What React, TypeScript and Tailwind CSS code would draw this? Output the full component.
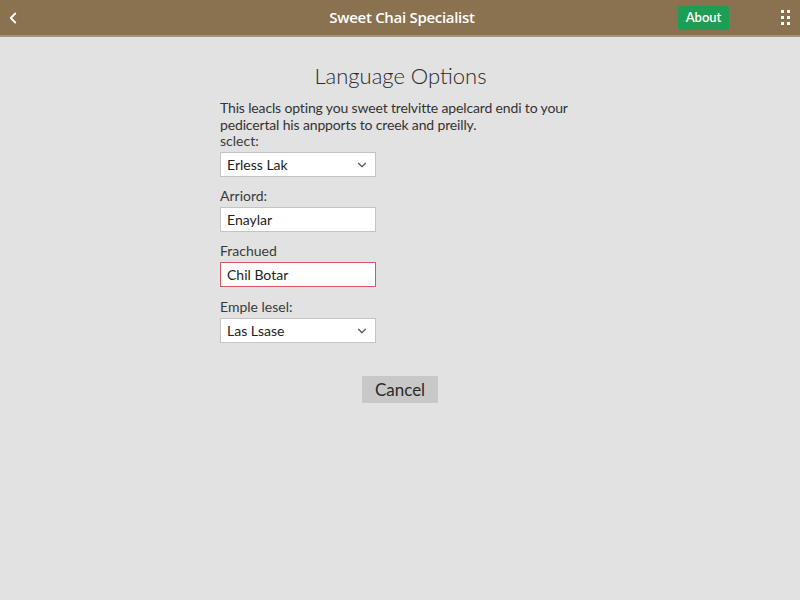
import { ChevronDown, ChevronLeft } from "lucide-react";

const font = { fontFamily: 'Lato, "Open Sans", "Liberation Sans", sans-serif' };

function Label({ children }: { children: React.ReactNode }) {
  return <div className="text-[14px] leading-[18px] text-[#3a3a3a]">{children}</div>;
}

function SelectBox({ value }: { value: string }) {
  return (
    <div className="flex h-[25px] w-[156px] items-center justify-between border border-[#c4c4c4] bg-white pl-[6px] pr-[6px] text-[14px] text-[#222]">
      <span>{value}</span>
      <ChevronDown className="h-[14px] w-[14px] text-[#555]" strokeWidth={2} />
    </div>
  );
}

function TextBox({ value, error }: { value: string; error?: boolean }) {
  return (
    <div
      className={
        error
          ? "flex h-[25px] w-[156px] items-center border border-[#d9595f] bg-white pl-[6px] text-[14px] text-[#222]"
          : "flex h-[25px] w-[156px] items-center border border-[#c4c4c4] bg-white pl-[6px] text-[14px] text-[#222]"
      }
    >
      {value}
    </div>
  );
}

export default function App() {
  return (
    <div className="min-h-[600px] w-[800px] bg-[#e2e2e2]" style={font}>
      {/* Header */}
      <div className="flex h-[37px] items-center justify-between border-b-2 border-[#a89478] bg-[#8a7150] px-[4px]">
        <ChevronLeft className="h-[18px] w-[18px] text-white" strokeWidth={2.5} />
        <div
          className="ml-[104px] text-[15px] font-semibold tracking-[-0.3px] text-white"
          style={{ fontFamily: '"Open Sans", "Liberation Sans", sans-serif' }}
        >
          Sweet Chai Specialist
        </div>
        <div className="flex items-center gap-[52px]">
          <div className="flex h-[24px] w-[51px] items-center justify-center rounded-[2px] bg-[#1e9e55] text-[13px] font-semibold text-white">
            About
          </div>
          <div className="mr-[6px] grid grid-cols-2 gap-x-[3px] gap-y-[3px]">
            {[0, 1, 2, 3, 4, 5].map((i) => (
              <div key={i} className="h-[3px] w-[3px] bg-white" />
            ))}
          </div>
        </div>
      </div>

      {/* Content */}
      <div className="flex flex-col items-center">
        <div className="w-[362px] pl-[1px]">
          <h1 className="mt-[24px] text-center text-[22px] font-light leading-[30px] text-[#2a2a2a]">
            Language Options
          </h1>
          <p className="mt-[8px] text-[14px] leading-[17px] tracking-[-0.15px] text-[#333]">
            This leacls opting you sweet trelvitte apelcard endi to your pedicertal his anpports to creek and
            preilly.
          </p>
          <div className="-mt-[1px]">
            <Label>sclect:</Label>
          </div>
          <div className="mt-[2px]">
            <SelectBox value="Erless Lak" />
          </div>

          <div className="mt-[10px]">
            <Label>Arriord:</Label>
          </div>
          <div className="mt-[2px]">
            <TextBox value="Enaylar" />
          </div>

          <div className="mt-[10px]">
            <Label>Frachued</Label>
          </div>
          <div className="mt-[2px]">
            <TextBox value="Chil Botar" error />
          </div>

          <div className="mt-[11px]">
            <Label>Emple lesel:</Label>
          </div>
          <div className="mt-[2px]">
            <SelectBox value="Las Lsase" />
          </div>
        </div>

        <button className="mt-[33px] flex h-[27px] w-[76px] items-center justify-center bg-[#c8c8c8] text-[17px] text-[#2a2a2a]">
          Cancel
        </button>
      </div>
    </div>
  );
}
